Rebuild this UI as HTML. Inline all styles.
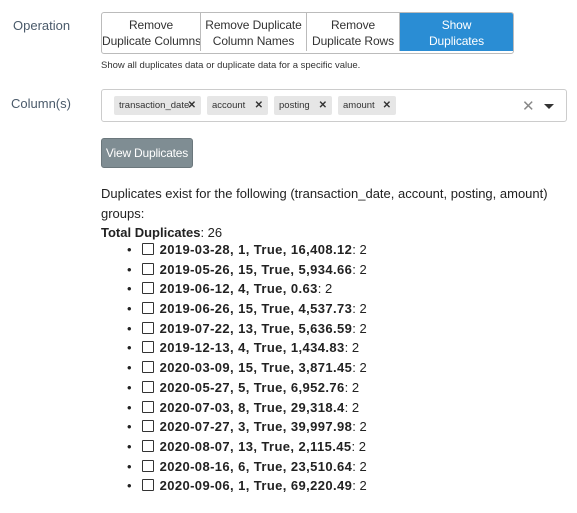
<!DOCTYPE html>
<html><head><style>
body{margin:0;width:577px;height:513px;background:#fff;font-family:"Liberation Sans",sans-serif;color:#222;position:relative;overflow:hidden}
.a{position:absolute;white-space:nowrap}
.lbl{color:#4a5a6a;font-size:13px}
.bg{position:absolute;left:101px;top:12px;height:40px;display:flex;border:1px solid #bbb;border-radius:3px;overflow:hidden}
.bg div{font-size:12px;letter-spacing:-0.1px;text-align:center;line-height:16px;padding-top:4px;border-right:1px solid #bbb;box-sizing:border-box;height:38px;color:#333;white-space:nowrap;overflow:hidden}
.tag{position:absolute;top:96px;height:19px;background:#e6e6e6;border-radius:2px;font-size:9.5px;line-height:19px;padding-left:5px;color:#333;white-space:nowrap;box-sizing:border-box}
.tag b{position:absolute;right:5px;top:0;font-size:10px}
.li{position:absolute;left:127px;font-size:13px;height:20px;line-height:20px;white-space:nowrap}
.li b{letter-spacing:0.4px}
.li i{display:inline-block;width:10px;height:10px;border:1px solid #333;border-radius:1px;vertical-align:-1px;margin:0 6px 0 10px}
</style></head><body>
<div class="a lbl" style="left:13px;top:18px">Operation</div>
<div class="bg">
<div style="width:99px">Remove<br>Duplicate Columns</div>
<div style="width:106px">Remove Duplicate<br>Column Names</div>
<div style="width:93px">Remove<br>Duplicate Rows</div>
<div style="width:113px;background:#2a8dd4;color:#fff;border:none">Show<br>Duplicates</div>
</div>
<div class="a" style="left:101px;top:60px;font-size:9.5px;color:#333">Show all duplicates data or duplicate data for a specific value.</div>
<div class="a lbl" style="left:11px;top:96px">Column(s)</div>
<div class="a" style="left:101px;top:89px;width:464px;height:31px;border:1px solid #ccc;border-radius:3px"></div>
<div class="tag" style="left:114px;width:87px">transaction_date<b>✕</b></div>
<div class="tag" style="left:207px;width:61px">account<b>✕</b></div>
<div class="tag" style="left:274px;width:58px">posting<b>✕</b></div>
<div class="tag" style="left:338px;width:58px">amount<b>✕</b></div>
<div class="a" style="left:522px;top:97px;font-size:15px;color:#888">✕</div>
<div class="a" style="left:544px;top:104px;width:0;height:0;border-left:5px solid transparent;border-right:5px solid transparent;border-top:5px solid #333"></div>
<div class="a" style="left:101px;top:138px;width:90px;height:28px;background:#7f8d93;border:1px solid #6b777c;border-radius:3px;color:#fff;font-size:12px;letter-spacing:-0.2px;line-height:28px;text-align:center">View Duplicates</div>
<div class="a" style="left:101px;top:184px;font-size:13px;line-height:19.5px;width:470px;white-space:normal">Duplicates exist for the following (transaction_date, account, posting, amount) groups:<br><b>Total Duplicates</b>: 26</div>
<div class="li" style="top:240px">•<i></i><b>2019-03-28, 1, True, 16,408.12</b>: 2</div>
<div class="li" style="top:260px">•<i></i><b>2019-05-26, 15, True, 5,934.66</b>: 2</div>
<div class="li" style="top:279px">•<i></i><b>2019-06-12, 4, True, 0.63</b>: 2</div>
<div class="li" style="top:299px">•<i></i><b>2019-06-26, 15, True, 4,537.73</b>: 2</div>
<div class="li" style="top:319px">•<i></i><b>2019-07-22, 13, True, 5,636.59</b>: 2</div>
<div class="li" style="top:338px">•<i></i><b>2019-12-13, 4, True, 1,434.83</b>: 2</div>
<div class="li" style="top:358px">•<i></i><b>2020-03-09, 15, True, 3,871.45</b>: 2</div>
<div class="li" style="top:378px">•<i></i><b>2020-05-27, 5, True, 6,952.76</b>: 2</div>
<div class="li" style="top:398px">•<i></i><b>2020-07-03, 8, True, 29,318.4</b>: 2</div>
<div class="li" style="top:417px">•<i></i><b>2020-07-27, 3, True, 39,997.98</b>: 2</div>
<div class="li" style="top:437px">•<i></i><b>2020-08-07, 13, True, 2,115.45</b>: 2</div>
<div class="li" style="top:457px">•<i></i><b>2020-08-16, 6, True, 23,510.64</b>: 2</div>
<div class="li" style="top:476px">•<i></i><b>2020-09-06, 1, True, 69,220.49</b>: 2</div>
</body></html>
